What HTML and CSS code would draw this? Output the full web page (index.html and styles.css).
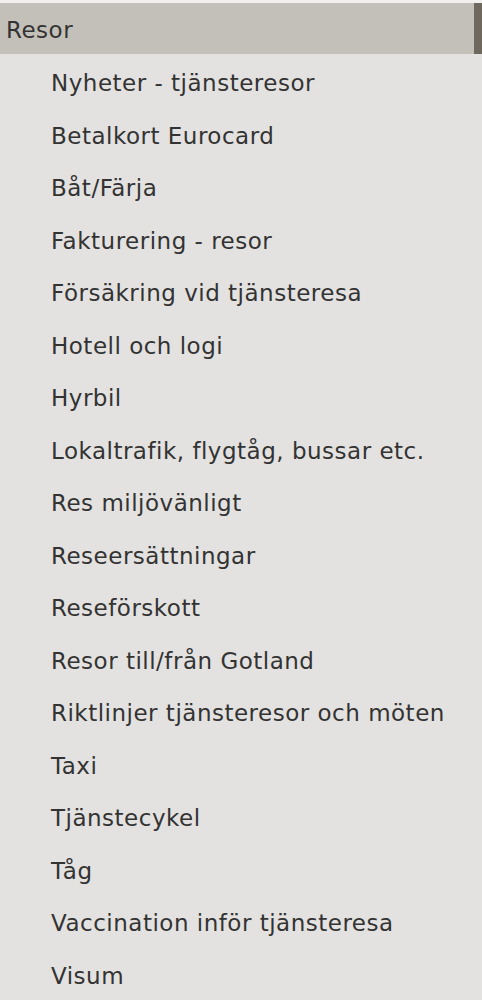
FILE: index.html
```html
<!DOCTYPE html>
<html lang="sv">
<head>
    <meta charset="UTF-8">
    <meta name="viewport" content="width=device-width, initial-scale=1.0">
    <title>Resor</title>
    <link rel="stylesheet" href="styles.css">
</head>
<body>
    <nav class="sub-menu">
        <div class="menu-title">Resor</div>
        <ul class="menu-list">
            <li>Nyheter - tjänsteresor</li>
            <li>Betalkort Eurocard</li>
            <li>Båt/Färja</li>
            <li>Fakturering - resor</li>
            <li>Försäkring vid tjänsteresa</li>
            <li>Hotell och logi</li>
            <li>Hyrbil</li>
            <li>Lokaltrafik, flygtåg, bussar etc.</li>
            <li>Res miljövänligt</li>
            <li>Reseersättningar</li>
            <li>Reseförskott</li>
            <li>Resor till/från Gotland</li>
            <li>Riktlinjer tjänsteresor och möten</li>
            <li>Taxi</li>
            <li>Tjänstecykel</li>
            <li>Tåg</li>
            <li>Vaccination inför tjänsteresa</li>
            <li>Visum</li>
        </ul>
    </nav>
</body>
</html>
```

FILE: styles.css
```css
* {
    margin: 0;
    padding: 0;
    box-sizing: border-box;
}

body {
    font-family: "DejaVu Sans", Verdana, sans-serif;
    background-color: #e3e2e0;
    color: #333;
}

.sub-menu {
    border-top: 3px solid #f1f0ee;
}

.menu-title {
    height: 51px;
    padding-left: 6px;
    padding-top: 2px;
    display: flex;
    align-items: center;
    font-size: 23px;
    letter-spacing: 0.5px;
    background-color: #c3c0b9;
    border-right: 8px solid #6e685f;
}

.menu-list {
    list-style: none;
    padding-top: 3px;
}

.menu-list li {
    height: 52.5px;
    line-height: 52.5px;
    padding-left: 51px;
    font-size: 23px;
    letter-spacing: 0.5px;
}
```
